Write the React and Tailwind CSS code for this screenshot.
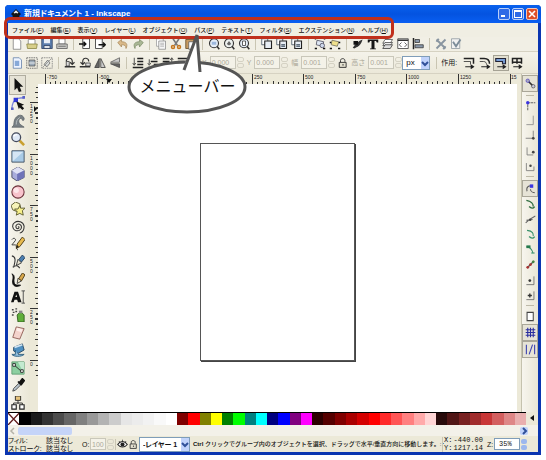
import React, { useState } from "react";

/* ---------- データ ---------- */
const MENUS = [
  ["ファイル", "F"],
  ["編集", "E"],
  ["表示", "V"],
  ["レイヤー", "L"],
  ["オブジェクト", "O"],
  ["パス", "P"],
  ["テキスト", "T"],
  ["フィルタ", "S"],
  ["エクステンション", "N"],
  ["ヘルプ", "H"],
];

const PALETTE = [
  "#000000", "#1a1a1a", "#333333", "#4d4d4d", "#666666", "#808080", "#999999",
  "#b3b3b3", "#cccccc", "#e6e6e6", "#ececec", "#f2f2f2", "#f9f9f9", "#ffffff",
  "#800000", "#ff0000", "#808000", "#ffff00", "#008000", "#00ff00", "#008080",
  "#00ffff", "#000080", "#0000ff", "#800080", "#ff00ff",
  "#2b0000", "#550000", "#800000", "#aa0000", "#d40000", "#ff0000", "#ff2a2a",
  "#ff5555", "#ff8080", "#ffaaaa", "#ffd5d5",
  "#280b0b", "#501616", "#782121", "#a02c2c", "#c83737", "#d35f5f", "#de8787",
  "#e9afaf",
];

/* ---------- アイコン (16x16) ---------- */
const ICONS = {
  // コマンドバー
  new: <path d="M3 1h7l3 3v11H3z" fill="#fff" stroke="#777" />,
  open: (
    <>
      <path d="M3 2h9v8H3z" fill="#fff" stroke="#777" />
      <path d="M1 8h14l-1 6H2z" fill="#d8cf8a" stroke="#85803f" />
    </>
  ),
  save: (
    <>
      <path d="M1 1h14v13H1z" fill="#5d7fae" stroke="#26385a" />
      <path d="M4 1h8v6H4z" fill="#e8eef6" />
      <path d="M4 10h8v4H4z" fill="#dfe3e8" stroke="#26385a" />
    </>
  ),
  print: (
    <>
      <path d="M4 1h8v7H4z" fill="#fff" stroke="#666" />
      <path d="M1 8h14v6H1z" fill="#c9c9c6" stroke="#555" />
      <path d="M3 11h10" stroke="#555" />
    </>
  ),
  import: (
    <>
      <path d="M5 1h9v13H5z" fill="#fff" stroke="#222" />
      <path d="M0 8h9M6 5l3 3-3 3" fill="none" stroke="#111" strokeWidth="2" />
    </>
  ),
  export: (
    <>
      <path d="M2 1h9v13H2z" fill="#fff" stroke="#222" />
      <path d="M6 9h9M12 6l3 3-3 3" fill="none" stroke="#111" strokeWidth="2" />
    </>
  ),
  undo: (
    <path d="M1 6l5-4v3c6 0 9 3 6 9 0-4-2-5-6-5v3z" fill="#d9b989" stroke="#a98a5c" />
  ),
  redo: (
    <path d="M15 6l-5-4v3C4 5 1 8 4 14c0-4 2-5 6-5v3z" fill="#a9b795" stroke="#7f8d6a" />
  ),
  copy: (
    <>
      <path d="M2 1h9v10H2z" fill="#fff" stroke="#999" />
      <path d="M5 4h9v11H5z" fill="#f5f5f5" stroke="#888" />
      <path d="M7 7h5M7 9h5M7 11h5" stroke="#aaa" />
    </>
  ),
  cut: (
    <>
      <path d="M4 1l6 9M12 1L6 10" stroke="#777" strokeWidth="2" />
      <circle cx="4" cy="12" r="2" fill="none" stroke="#c4761d" strokeWidth="2" />
      <circle cx="12" cy="12" r="2" fill="none" stroke="#c4761d" strokeWidth="2" />
    </>
  ),
  paste: (
    <>
      <path d="M1 2h11v12H1z" fill="#c79b62" stroke="#5e431e" />
      <path d="M5 5h9v10H5z" fill="#fff" stroke="#555" />
    </>
  ),
  zoomSel: (
    <>
      <circle cx="8" cy="7" r="6" fill="#e5edf8" stroke="#333" strokeWidth="1.5" />
      <path d="M5 5h6v4H5z" fill="#9db8dd" />
      <path d="M12 11l3 4" stroke="#333" strokeWidth="2" />
    </>
  ),
  zoomDraw: (
    <>
      <circle cx="8" cy="7" r="6" fill="#eef2f0" stroke="#333" strokeWidth="1.5" />
      <path d="M5 8l3-4 3 4-3 2z" fill="#666" />
      <path d="M12 11l3 4" stroke="#333" strokeWidth="2" />
    </>
  ),
  zoomPage: (
    <>
      <circle cx="8" cy="7" r="6" fill="#e5edf8" stroke="#333" strokeWidth="1.5" />
      <path d="M6 4h4v6H6z" fill="#fff" stroke="#333" />
      <path d="M12 11l3 4" stroke="#333" strokeWidth="2" />
    </>
  ),
  dup: (
    <>
      <path d="M1 1h8v8H1z" fill="#fff" stroke="#345" />
      <path d="M5 4h9v10H5z" fill="#e8eef5" stroke="#222" strokeWidth="1.5" />
    </>
  ),
  clone: (
    <>
      <path d="M1 1h8v8H1z" fill="#fff" stroke="#345" />
      <path d="M5 4h9v10H5z" fill="#e8eef5" stroke="#222" strokeWidth="1.5" />
      <path d="M7 9h5M7 11h5" stroke="#345" strokeWidth="1.5" />
    </>
  ),
  group: (
    <>
      <path d="M4 3l9 2-2 6-8-2z" fill="#dfe8f5" stroke="#445" />
      <path d="M1 14h3M12 14h3M1 1h2M13 1h2" stroke="#111" strokeWidth="2" />
      <circle cx="11" cy="10" r="3" fill="#cdd7ea" stroke="#445" />
    </>
  ),
  ungroup: (
    <>
      <path d="M4 3l9 2-2 6-8-2z" fill="#efe08c" stroke="#665" />
      <path d="M1 14h3M12 14h3M1 6h2M13 6h2" stroke="#111" strokeWidth="2" />
    </>
  ),
  fill: (
    <>
      <path d="M1 13c4-6 8-9 13-11-1 6-6 10-11 12z" fill="#333" />
      <path d="M2 4h6v5H2z" fill="#111" />
    </>
  ),
  text: <path d="M1 2h14v4h-2L12 4h-2v10h2v1H4v-1h2V4H4L3 6H1z" fill="#151515" />,
  layers: (
    <>
      <path d="M4 2h10l-3 5H1z" fill="#fff" stroke="#444" />
      <path d="M4 6h10l-3 4H1z" fill="#eee" stroke="#444" />
      <path d="M4 9h10l-3 5H1z" fill="#ddd" stroke="#333" />
    </>
  ),
  xml: (
    <>
      <path d="M1 1h14v13H1z" fill="#fff" stroke="#333" />
      <path d="M1 3h14" stroke="#333" strokeWidth="2" />
      <path d="M6 6L3 9l3 3M10 6l3 3-3 3" fill="none" stroke="#333" />
    </>
  ),
  align: (
    <>
      <path d="M2 0v15" stroke="#222" strokeWidth="2" />
      <path d="M4 2h6v4H4zM4 9h11v4H4z" fill="#8b99ab" stroke="#333" />
    </>
  ),
  prefs: (
    <path d="M2 2l12 12M14 2L2 14M5 1L2 5M11 15l3-4" stroke="#8995a0" strokeWidth="2.5" fill="none" />
  ),
  docprefs: (
    <>
      <path d="M2 1h11v13H2z" fill="#f1f1f1" stroke="#8a949c" />
      <path d="M4 5l4 6 6-9" stroke="#7c8c99" strokeWidth="2.5" fill="none" />
    </>
  ),
  // ツールコントロール
  selAll: (
    <>
      <path d="M3 1h8l3 3v11H3z" fill="#eef4ff" stroke="#5d7ba5" />
      <path d="M5 5h6v7H5z" fill="#87a9d8" />
    </>
  ),
  selLayer: (
    <>
      <path d="M1 1h14v14H1z" fill="none" stroke="#555" strokeDasharray="2 1" />
      <path d="M4 4h8v8H4z" fill="#9cabb9" stroke="#555" />
      <path d="M4 8h8" stroke="#fff" />
    </>
  ),
  desel: (
    <>
      <path d="M1 1h14v14H1z" fill="none" stroke="#777" strokeDasharray="2 1" />
      <path d="M4 10l5-6 3 4-4 5z" fill="#d7dad8" stroke="#666" />
      <path d="M2 14L14 2" stroke="#888" />
    </>
  ),
  rotL: (
    <>
      <path d="M1 13h14" stroke="#333" strokeWidth="2" />
      <path d="M3 6c0-5 7-6 8-1v4M8 7l3 3 3-3" fill="none" stroke="#333" strokeWidth="1.5" />
      <path d="M3 6h4v6H3z" fill="#ddd" stroke="#333" />
    </>
  ),
  rotR: (
    <>
      <path d="M1 13h14" stroke="#333" strokeWidth="2" />
      <path d="M13 6c0-5-7-6-8-1v4M8 7l-3 3-3-3" fill="none" stroke="#333" strokeWidth="1.5" />
      <path d="M9 8h6v4H9z" fill="#ddd" stroke="#333" />
    </>
  ),
  flipH: (
    <>
      <path d="M7 2v12H1z" fill="#666" stroke="#333" />
      <path d="M9 2v12h6z" fill="#ccc" stroke="#333" />
    </>
  ),
  flipV: (
    <>
      <path d="M14 1v6H2z" fill="#ccc" stroke="#555" />
      <path d="M14 14V9H2z" fill="#666" stroke="#444" />
    </>
  ),
  toBottom: (
    <>
      <path d="M1 14h14M7 10h8M7 6h8M7 2h8" stroke="#222" strokeWidth="2" />
      <path d="M3 1v9M1 8l2 3 2-3" stroke="#222" fill="none" />
    </>
  ),
  lower: (
    <>
      <path d="M1 14h14M9 10h6M5 6h9M9 2h5" stroke="#222" strokeWidth="2" />
      <path d="M3 3v6M1 8l2 3 2-3" stroke="#222" fill="none" />
    </>
  ),
  raise: (
    <>
      <path d="M1 14h14M9 10h6M1 6h9M1 2h9" stroke="#222" strokeWidth="2" />
      <path d="M13 8V2M11 4l2-3 2 3" stroke="#222" fill="none" />
    </>
  ),
  toTop: (
    <>
      <path d="M1 2h14M1 6h9M1 10h9M1 14h9" stroke="#222" strokeWidth="2" />
      <path d="M13 14V5M11 7l2-3 2 3" stroke="#222" fill="none" />
    </>
  ),
  lock: (
    <>
      <path d="M4 7V4c0-4 7-4 7 0v2" fill="none" stroke="#333" strokeWidth="1.5" />
      <path d="M2 7h11v8H2z" fill="#e3e0cf" stroke="#333" strokeWidth="1.5" />
      <path d="M7 10h2v2H7z" fill="#333" />
    </>
  ),
  affStroke: (
    <>
      <path d="M1 2h13v7" fill="none" stroke="#222" strokeWidth="2" />
      <path d="M1 6h9v4" fill="none" stroke="#222" />
      <path d="M3 13h10M11 11l3 2-3 2z" stroke="#222" strokeWidth="1.5" />
    </>
  ),
  affCorner: (
    <>
      <path d="M1 2h6c5 0 7 3 7 7" fill="none" stroke="#222" strokeWidth="2" />
      <path d="M1 6h5c3 0 4 2 4 4" fill="none" stroke="#222" />
      <path d="M3 13h10M11 11l3 2-3 2z" stroke="#222" strokeWidth="1.5" />
    </>
  ),
  affGrad: (
    <>
      <path d="M1 2h13v7h-4V6H1z" fill="#7aa0d8" stroke="#223" strokeWidth="1.5" />
      <path d="M3 13h10M11 11l3 2-3 2z" stroke="#222" strokeWidth="1.5" />
    </>
  ),
  affPattern: (
    <>
      <path d="M1 2h14M1 7h14M2 1v8M8 1v8M14 1v8" stroke="#222" strokeWidth="2" />
      <path d="M3 13h10M11 11l3 2-3 2z" stroke="#222" strokeWidth="1.5" />
    </>
  ),
  // ツールボックス
  select: <path d="M4 0v14l3-3 2 5 3-1-2-5h4z" fill="#111" />,
  node: (
    <>
      <path d="M1 15c0-7 2-10 6-12 3-1 5-1 8-1" fill="none" stroke="#7d86dc" strokeWidth="1.5" />
      <path d="M3 2h5v5H3z" fill="#3038d8" />
      <path d="M13 0h3v3h-3zM0 13h3v3H0z" fill="#555fc8" />
      <path d="M6 6l9 4-3 1 3 3-2 2-3-3-1 2z" fill="#111" />
    </>
  ),
  tweak: (
    <>
      <path d="M1 15c3-1 2-5 3-8 2-6 9-8 11-2 0 2-1 3-2 2 0-2-3-3-4 0-1 4 3 6 6 8z" fill="#777f84" stroke="#62696d" />
      <path d="M6 12c0-4 1-6 4-8" fill="none" stroke="#bcc2c4" />
    </>
  ),
  zoom: (
    <>
      <path d="M10 10l5 5" stroke="#c9a030" strokeWidth="3" />
      <circle cx="6" cy="6" r="5" fill="#dfe9f6" stroke="#444a5c" strokeWidth="1.5" />
      <path d="M3 5c1-2 3-2 4-2" stroke="#fff" fill="none" strokeWidth="1.5" />
    </>
  ),
  rect: (
    <>
      <path d="M1 2h14v13H1z" fill="#a9cbe6" stroke="#3c4c5c" />
      <path d="M2 3h12L2 14z" fill="#d5e6f4" />
    </>
  ),
  box: (
    <>
      <path d="M8 0l7 4v8l-8 4-6-4V4z" fill="#a9acdc" stroke="#44475f" />
      <path d="M8 0l7 4-8 4-6-4z" fill="#dfe1f5" />
      <path d="M7 8v8l8-4V4z" fill="#6f73b8" />
    </>
  ),
  ellipse: (
    <>
      <circle cx="8" cy="8" r="7" fill="#f8c3cc" stroke="#6b3039" strokeWidth="1.2" />
      <circle cx="6" cy="6" r="3" fill="#fde6e9" />
    </>
  ),
  star: (
    <>
      <path d="M5 0l5 2 1 5-4 4-5-2L0 4z" fill="#f6f3b8" stroke="#55532a" />
      <path d="M10 4l1 3h5l-3 3 1 5-4-2-4 2 1-4-3-3h4z" fill="#f7f08a" stroke="#55532a" />
    </>
  ),
  spiral: (
    <path d="M8 8c1-1 2 1 0 2-2 0-3-2-2-4 2-3 6-1 6 2 0 4-4 5-7 4-4-2-4-7-1-9 4-3 10-1 11 4 0 4-2 7-5 8" fill="none" stroke="#333" strokeWidth="1.2" />
  ),
  pencil: (
    <>
      <path d="M1 3c2-3 5-1 4 1L1 9h4c2 0 0 5 3 6" fill="none" stroke="#333" />
      <path d="M6 13l1-5 6-8 3 3-6 8z" fill="#e7ba4f" stroke="#443514" />
      <path d="M6 13l1-4 2 2z" fill="#222" />
    </>
  ),
  pen: (
    <>
      <path d="M1 1c5 1 4 6 2 13M2 14c4-3 6-2 8 1" fill="none" stroke="#333" strokeWidth="1.2" />
      <path d="M6 12l2-7 4 4z" fill="#e9e4d2" stroke="#333" />
      <path d="M9 5l4-5 3 3-4 5z" fill="#4b7fb0" stroke="#243c55" />
    </>
  ),
  calligraphy: (
    <>
      <path d="M1 1c5 2 1 7 3 11 2 3 5 1 7 2-3 2-8 2-9-2C1 8 4 4 1 1z" fill="#111" stroke="#111" />
      <path d="M7 12l1-6 4 3z" fill="#efe6c8" stroke="#333" />
      <path d="M9 6l4-6 3 2-4 7z" fill="#d8a84c" stroke="#443514" />
    </>
  ),
  type: (
    <>
      <path d="M0 14L4 2h4l4 12H8l-1-3H4l-1 3zM5 8h2L6 5z" fill="#111" fillRule="evenodd" />
      <path d="M14 1v14M12 1h4M12 15h4" stroke="#444" />
    </>
  ),
  spray: (
    <>
      <path d="M7 8l4-4 4 4v8H8z" fill="#5fae3a" stroke="#2d5a1a" />
      <path d="M9 3h4v3H9z" fill="#888" />
      <path d="M1 2h2M5 1h2M2 5h2M5 4h2M1 8h2" stroke="#444" strokeWidth="1.5" />
    </>
  ),
  eraser: (
    <>
      <path d="M6 1l9 2-5 12-8-2z" fill="#f3d3cc" stroke="#8b5a52" />
      <path d="M7 2l6 2-1 3-6-2z" fill="#fdeeea" />
    </>
  ),
  bucket: (
    <>
      <path d="M3 5l10-4 2 7-7 4-5-3z" fill="#4e8fc0" stroke="#23445e" />
      <path d="M4 5l9-3" stroke="#cfe4f3" strokeWidth="2" />
      <path d="M5 8v5H1c2 3 11 3 14 0H8" fill="#8fbede" stroke="#285a7c" />
    </>
  ),
  gradient: (
    <>
      <path d="M1 1h14v14H1z" fill="#8ccfa0" stroke="#5c9c70" />
      <path d="M8 1h7v14z" fill="#c3ead0" />
      <path d="M3 4l9 8" stroke="#222" />
      <path d="M2 3h3v3H2zM11 10h3v3h-3z" fill="#fff" stroke="#222" />
    </>
  ),
  dropper: (
    <>
      <path d="M2 15l1-3 6-6 2 2-6 6z" fill="#b8c4cc" stroke="#444" />
      <path d="M8 4l4 4M10 5l3-4 2 2-3 4z" stroke="#111" strokeWidth="2" fill="#111" />
    </>
  ),
  connector: (
    <>
      <path d="M8 5v4M3 11V8h10v3" fill="none" stroke="#222" />
      <path d="M5 0h6v5H5z" fill="#e7c37c" stroke="#222" />
      <path d="M1 10h5v5H1zM10 10h5v5h-5z" fill="#fff" stroke="#222" strokeWidth="1.3" />
    </>
  ),
  // スナップバー
  snap: (
    <>
      <path d="M4 4l8 8" stroke="#333" strokeWidth="2.5" />
      <circle cx="4" cy="4" r="2.5" fill="#aab" stroke="#4a3fc4" />
      <circle cx="12" cy="12" r="2.5" fill="#ccd" stroke="#444" />
    </>
  ),
  snapBox: (
    <>
      <path d="M4 15V4h11" fill="none" stroke="#666" strokeDasharray="4 1" strokeWidth="1.5" />
      <circle cx="4" cy="4" r="2.5" fill="#3b35e0" />
    </>
  ),
  snapEdge: <path d="M12 1v13H2" fill="none" stroke="#888" strokeWidth="1.2" />,
  snapCorner: (
    <>
      <path d="M12 1v11H1" fill="none" stroke="#777" strokeWidth="1.2" />
      <circle cx="12" cy="12" r="2" fill="#444" />
    </>
  ),
  snapMid: (
    <>
      <path d="M3 2v11h9" fill="none" stroke="#777" strokeWidth="1.2" />
      <circle cx="12" cy="9" r="2" fill="#444" />
    </>
  ),
  snapCenter: (
    <>
      <path d="M2 3v11h11V8" fill="none" stroke="#777" strokeWidth="1.2" />
      <circle cx="8" cy="7" r="1.8" fill="#444" />
    </>
  ),
  snapNode: (
    <>
      <path d="M3 12c-2-8 5-9 8-7M8 9c0 3 3 5 6 5" fill="none" stroke="#555" strokeWidth="1.5" />
      <path d="M7 2h5v5H7z" fill="#3b35e0" />
    </>
  ),
  snapPath: (
    <>
      <path d="M2 2c9 2 10 5 10 9" fill="none" stroke="#2c6b3e" strokeWidth="2" />
      <path d="M6 11c3 3 6 3 8 0" fill="none" stroke="#2c6b3e" strokeWidth="2" />
    </>
  ),
  snapCross: (
    <>
      <path d="M1 13c3-3 8-7 14-10M2 9l9-1" fill="none" stroke="#666" strokeWidth="1.5" />
      <path d="M6 7h3v3H6z" fill="#444" />
    </>
  ),
  snapCusp: (
    <>
      <path d="M3 2c9 1 9 5 9 8" fill="none" stroke="#35906a" strokeWidth="1.5" />
      <path d="M6 11c3 3 6 3 8 0" fill="none" stroke="#35906a" strokeWidth="2" />
    </>
  ),
  snapSmooth: (
    <>
      <path d="M2 4c5 0 8 3 10 10M9 13h5" fill="none" stroke="#35906a" strokeWidth="1.5" />
      <path d="M2 2h6v4H2z" fill="#277a4d" />
    </>
  ),
  snapLine: (
    <>
      <path d="M3 13L13 3" stroke="#555" strokeWidth="2" />
      <circle cx="4" cy="12" r="2" fill="#a33" />
      <circle cx="8" cy="8" r="2" fill="#a33" />
      <circle cx="12" cy="4" r="2" fill="#484" />
    </>
  ),
  snapObj: (
    <>
      <path d="M13 2v12H2" fill="none" stroke="#666" strokeWidth="1.2" />
      <circle cx="7" cy="8" r="2" fill="#333" />
    </>
  ),
  snapRot: (
    <>
      <path d="M13 2v12H2" fill="none" stroke="#666" strokeWidth="1.2" />
      <path d="M7 5v6M4 8h6" stroke="#333" strokeWidth="2" />
    </>
  ),
  snapPage: <path d="M3 2h9v12H3z" fill="#fff" stroke="#444" strokeWidth="1.5" />,
  snapGrid: (
    <path d="M1 4h14M1 8h14M1 12h14M4 1v14M8 1v14M12 1v14" stroke="#2a2ea0" strokeWidth="1.6" />
  ),
  snapGuide: <path d="M2 1v14M14 1v14M6 15L11 1" stroke="#3c42b0" strokeWidth="1.6" />,
  // ステータスバー
  eye: (
    <>
      <path d="M1 8c4-6 10-6 14 0-4 5-10 5-14 0z" fill="#fff" stroke="#222" strokeWidth="1.5" />
      <circle cx="8" cy="8" r="3" fill="#222" />
      <path d="M3 3l1 2M8 1v2M13 3l-1 2" stroke="#222" />
    </>
  ),
};

const COMMANDS = [
  "new", "open", "save", "print", "|", "import", "export", "|", "undo", "redo",
  "|", "copy", "cut", "paste", "|", "zoomSel", "zoomDraw", "zoomPage", "|",
  "dup", "clone", "clone", "|", "group", "ungroup", "|", "fill", "text",
  "layers", "xml", "align", "|", "prefs", "docprefs",
];

const SELECT_CONTROLS = [
  "selAll", "selLayer", "desel", "|", "rotL", "rotR", "flipH", "flipV", "|",
  "toBottom", "lower", "raise", "toTop",
];

const TOOLS = [
  "select", "node", "tweak", "zoom", "rect", "box", "ellipse", "star",
  "spiral", "pencil", "pen", "calligraphy", "type", "spray", "eraser",
  "bucket", "gradient", "dropper", "connector",
];

const SNAPS = [
  "snap", "|", "snapBox", "snapEdge", "snapCorner", "snapMid", "snapCenter",
  "|", "snapNode", "snapPath", "snapCross", "snapCusp", "snapSmooth",
  "snapLine", "snapObj", "snapRot", "|", "snapPage", "snapGrid", "snapGuide",
];

const SNAP_ON = ["snap", "snapNode", "snapGrid", "snapGuide"];

/* ---------- 部品 ---------- */
const Icon = ({ name, className = "size-3" }) => (
  <svg viewBox="0 0 16 16" className={`shrink-0 ${className}`} aria-hidden="true">
    {ICONS[name]}
  </svg>
);

const IconRow = ({ items }) =>
  items.map((name, i) =>
    name === "|" ? (
      <span key={i} className="flex w-2 shrink-0 justify-center">
        <span className="h-3 w-px bg-[#c9c5b2]" />
      </span>
    ) : (
      <button key={i} aria-label={name} className="flex w-[15px] shrink-0 justify-center">
        <Icon name={name} />
      </button>
    )
  );

const Spinner = () => (
  <span className="flex w-[7px] shrink-0 flex-col gap-px">
    <span className="h-[5px] rounded-xs border border-[#d5d2c4]" />
    <span className="h-[5px] rounded-xs border border-[#d5d2c4]" />
  </span>
);

const NumField = ({ label, value }) => (
  <label className="flex shrink-0 items-center gap-[3px] text-[#aca899]">
    {label}
    <span className="flex items-center gap-px">
      <input
        defaultValue={value}
        disabled
        className="h-[13px] w-[26px] border border-[#c9c7ba] bg-[#f4f2e8] pl-px text-[7px] text-[#aca899]"
      />
      <Spinner />
    </span>
  </label>
);

const Chevron = () => (
  <span className="pointer-events-none absolute inset-y-px right-px flex w-2 items-center justify-center bg-[#c1d3fb]">
    <svg viewBox="0 0 8 8" className="size-2">
      <path d="M1 3l3 3 3-3" fill="none" stroke="#31519a" strokeWidth="2" />
    </svg>
  </span>
);

// 大目盛りの間隔 (250 単位)
const STEP = 51.6;

const HRuler = () => {
  const majors = [-3, -2, -1, 0, 1, 2, 3, 4, 5];
  return (
    <svg className="h-[10px] w-full" aria-hidden="true">
      {majors.map((n) => {
        const x = Math.round(162 + n * STEP);
        return (
          <g key={n}>
            <path d={`M${x + 0.5} 0v10`} stroke="#333" />
            {[1, 2, 3, 4, 5, 6, 7, 8, 9].map((m) => (
              <path
                key={m}
                d={`M${Math.round(x + (m * STEP) / 10) + 0.5} ${m % 2 ? 8 : 7}V10`}
                stroke="#333"
              />
            ))}
            {/* -250 と 0 は吹き出しの下 */}
            {n !== -1 && n !== 0 && (
              <text x={x + 2} y="5" fontSize="5" fill="#222">
                {n * 250}
              </text>
            )}
          </g>
        );
      })}
      <path d="M472.5 0v10" stroke="#333" />
      <text x="473" y="5" fontSize="5" fill="#222">
        15
      </text>
      <path d="M68 5h6l-3 4z" fill="#111" />
    </svg>
  );
};

const VRuler = () => {
  const majors = [0, 1, 2, 3, 4, 5];
  return (
    <svg className="h-full w-2" aria-hidden="true">
      {majors.map((n) => {
        const y = Math.round(276 - n * STEP);
        return (
          <g key={n}>
            <path d={`M0 ${y + 0.5}h8`} stroke="#333" />
            {[-9, -8, -7, -6, -5, -4, -3, -2, -1, 1, 2, 3].map((m) => (
              <path
                key={m}
                d={`M${m % 2 ? 6 : 5} ${Math.round(y + (m * STEP) / 10) + 0.5}H8`}
                stroke="#333"
              />
            ))}
            {String(n * 250).split("").map((c, i) => (
              <text key={i} x="0" y={y + 6 + i * 5} fontSize="5" fill="#222">
                {c}
              </text>
            ))}
          </g>
        );
      })}
      <path d="M4 22v6l3-3z" fill="#111" />
    </svg>
  );
};

/* ---------- 画面 ---------- */
const App = () => {
  const [tool, setTool] = useState("select");

  return (
    <div className="relative flex min-h-screen flex-col bg-white p-[5px] font-['Liberation_Sans','Noto_Sans_CJK_JP',sans-serif] text-[7px] leading-none text-[#111]">
      <div className="flex flex-1 flex-col rounded-t-sm border-x-[3px] border-b-[3px] border-[#0a35b0] bg-[#ece9d8]">
        {/* タイトルバー */}
        <header className="-mx-[3px] flex h-[18px] shrink-0 items-center rounded-t-sm bg-linear-to-b from-[#0a62ee] via-[#0453e0] to-[#0a5ff2] pr-[3px] pl-[3px]">
          <svg viewBox="0 0 16 16" className="mx-[3px] size-[10px]" aria-hidden="true">
            <path d="M8 0l8 8-3 3 1 2-6 3-6-3 1-2-3-3z" fill="#151515" />
            <path d="M8 2l4 4-2 1-2-1-2 1-2-1z" fill="#eee" />
          </svg>
          <h1 className="flex-1 text-[8px] font-bold whitespace-nowrap text-white [font-feature-settings:'palt']">
            新規ドキュメント 1 - Inkscape
          </h1>
          <div className="flex gap-[2px]">
            <button aria-label="最小化" className="flex size-3 items-end rounded-xs border border-[#b9cff8] bg-[#2f6ae6] p-[2px]">
              <span className="h-[2px] w-1 bg-white" />
            </button>
            <button aria-label="最大化" className="size-3 rounded-xs border border-[#b9cff8] bg-[#2f6ae6] p-px">
              <span className="block size-2 border border-t-2 border-white" />
            </button>
            <button aria-label="閉じる" className="size-3 rounded-xs border border-[#f3c6b8] bg-[#df4f28]">
              <svg viewBox="0 0 10 10" className="size-[10px]">
                <path d="M2 2l6 6M8 2L2 8" stroke="#fff" strokeWidth="1.6" />
              </svg>
            </button>
          </div>
        </header>

        {/* メニューバー */}
        <nav className="flex h-[14px] shrink-0 items-center bg-[#f0eee3] pl-1">
          <ul className="flex w-[376px] justify-between text-[6px] font-medium">
            {MENUS.map(([name, key]) => (
              <li key={key}>
                <button className="block whitespace-nowrap">
                  {name}(<u>{key}</u>)
                </button>
              </li>
            ))}
          </ul>
        </nav>

        {/* コマンドバー */}
        <div className="flex h-[14px] shrink-0 items-center bg-[#f1efe5] pl-px">
          <IconRow items={COMMANDS} />
        </div>

        {/* ツールコントロールバー */}
        <div className="flex h-[23px] shrink-0 items-center border-y border-t-[#d6d2c2] border-b-[#d6d2c2] bg-linear-to-b from-[#f5f3ea] to-[#ebe8d9] pl-px">
          <IconRow items={SELECT_CONTROLS} />
          <div className="ml-3 flex items-center gap-[3px]">
            <NumField label="X" value="0.000" />
            <NumField label="Y" value="0.000" />
            <NumField label="幅" value="0.001" />
            <button aria-label="縦横比を固定">
              <Icon name="lock" className="size-[10px]" />
            </button>
            <NumField label="高さ" value="0.001" />
          </div>
          <span className="relative">
            <select
              aria-label="単位"
              className="block h-[14px] w-7 appearance-none border border-[#7f9db9] bg-white pl-[3px] text-[8px]"
            >
              <option>px</option>
            </select>
            <Chevron />
          </span>
          <span className="mr-1 ml-[6px] h-3 w-px bg-[#c9c5b2]" />
          <span className="whitespace-nowrap">作用:</span>
          <div className="ml-1 flex">
            {["affStroke", "affCorner", "affGrad", "affPattern"].map((name) => (
              <button
                key={name}
                aria-label={name}
                className={`flex h-4 w-4 items-center justify-center ${
                  name === "affGrad" ? "border border-[#a5a294] bg-[#e2dfd0]" : ""
                }`}
              >
                <Icon name={name} />
              </button>
            ))}
          </div>
        </div>

        {/* 作業エリア */}
        <main className="flex flex-1">
          <div className="flex w-[22px] shrink-0 flex-col items-start bg-linear-to-r from-[#f7f5ee] to-[#e9e6d6] pt-px pl-px">
            {TOOLS.map((name) => (
              <button
                key={name}
                aria-label={name}
                aria-pressed={tool === name}
                onClick={() => setTool(name)}
                className={`flex w-[17px] flex-1 items-center justify-center ${
                  tool === name ? "border border-[#b0ad9f] bg-[#e6e3d6]" : ""
                }`}
              >
                <Icon name={name} className="size-[14px]" />
              </button>
            ))}
          </div>
          <div className="flex w-2 shrink-0 pt-[10px]">
            <VRuler />
          </div>
          <div className="flex min-w-0 flex-1 flex-col">
            <HRuler />
            <div className="flex flex-1 items-center justify-center bg-white pt-2">
              <div className="h-[218px] w-[155px] border border-[#555] bg-white shadow-[1px_1px_0_#444]" />
            </div>
          </div>
          <div className="w-[5px] shrink-0 border-r border-[#c5c2ae]" />
          <div className="flex w-4 shrink-0 flex-col bg-linear-to-r from-[#f7f5ee] to-[#e9e6d6] pt-px pb-[54px]">
            {SNAPS.map((name, i) =>
              name === "|" ? (
                <span key={i} className="flex h-[6px] items-center px-1">
                  <span className="h-px w-full bg-[#bdb9a8]" />
                </span>
              ) : (
                <button
                  key={i}
                  aria-label={name}
                  className={`flex flex-1 items-center justify-center ${
                    SNAP_ON.includes(name) ? "border border-[#a9a698] bg-[#e6e3d6]" : ""
                  }`}
                >
                  <Icon name={name} className="size-[11px]" />
                </button>
              )
            )}
          </div>
        </main>

        {/* カラーパレット */}
        <div className="flex h-[13px] shrink-0">
          <div className="flex flex-1 border-t border-black">
            <button aria-label="なし" className="flex-1 bg-white">
              <svg viewBox="0 0 12 12" preserveAspectRatio="none" className="size-full">
                <path d="M0 0l12 12M12 0L0 12" stroke="#5e1a1a" strokeWidth="1.4" />
              </svg>
            </button>
            {PALETTE.map((color, i) => (
              <button key={i} aria-label={color} className="flex-1" style={{ background: color }} />
            ))}
          </div>
          <button aria-label="パレットメニュー" className="w-3">
            <svg viewBox="0 0 12 12" className="size-3">
              <path d="M8 2v6L4 5z" fill="#111" />
            </svg>
          </button>
        </div>

        {/* 横スクロールバー */}
        <div className="flex h-[11px] shrink-0 items-center bg-[#f3f1e9] pr-[10px]">
          <svg viewBox="0 0 8 8" className="ml-px size-2">
            <path d="M5 1L2 4l3 3" fill="none" stroke="#b5b3a8" strokeWidth="1.5" />
          </svg>
          <span className="ml-px h-2 w-[54px] rounded-xs bg-[#c5d4f8]" />
          <span className="flex-1" />
          <span className="flex size-2 items-center justify-center rounded-xs bg-[#c1d3fb]">
            <svg viewBox="0 0 8 8" className="size-2">
              <path d="M3 1l3 3-3 3" fill="none" stroke="#31519a" strokeWidth="2" />
            </svg>
          </span>
        </div>

        {/* ステータスバー */}
        <footer className="flex h-4 shrink-0 items-center">
          <dl className="grid w-[74px] shrink-0 grid-cols-[38px_1fr] gap-y-px whitespace-nowrap [font-feature-settings:'palt']">
            <dt>フィル:</dt>
            <dd>該当なし</dd>
            <dt>ストローク:</dt>
            <dd>該当なし</dd>
          </dl>
          <label className="flex shrink-0 items-center gap-px">
            <span className="w-[7px]">O:</span>
            <input
              defaultValue="100"
              disabled
              className="h-3 w-4 border border-[#c9c7ba] bg-[#f4f2e8] pl-px text-[7px] text-[#aca899]"
            />
            <Spinner />
          </label>
          <div className="mx-px flex shrink-0 items-center gap-px border-l border-[#c9c5b2] pl-px">
            <button aria-label="レイヤーの表示">
              <Icon name="eye" className="size-[11px]" />
            </button>
            <button aria-label="レイヤーのロック">
              <Icon name="lock" className="size-[9px]" />
            </button>
          </div>
          <span className="relative shrink-0">
            <select
              aria-label="レイヤー"
              className="block h-[15px] w-[51px] appearance-none border border-[#7f9db9] bg-white pl-[3px] text-[7px] font-bold [font-feature-settings:'palt']"
            >
              <option>-レイヤー 1</option>
            </select>
            <Chevron />
          </span>
          <p className="ml-[3px] min-w-0 flex-1 text-[6px] font-medium whitespace-nowrap">
            <b>Ctrl</b> クリックでグループ内のオブジェクトを選択、ドラッグで水平/垂直方向に移動します。:･
          </p>
          <dl className="grid shrink-0 grid-cols-[9px_30px] gap-y-px border-l border-[#c9c5b2] pl-px font-['Liberation_Mono',monospace]">
            <dt>X:</dt>
            <dd className="text-right">-440.00</dd>
            <dt>Y:</dt>
            <dd className="text-right">1217.14</dd>
          </dl>
          <label className="mr-[11px] ml-1 flex shrink-0 items-center gap-px">
            <span className="w-[6px]">Z:</span>
            <input
              defaultValue="35%"
              className="h-3 w-[26px] border border-[#7f9db9] bg-white pl-1 font-['Liberation_Mono',monospace] text-[7px]"
            />
            <span className="flex w-[6px] flex-col gap-px">
              <span className="h-[5px] rounded-xs bg-[#9db8ee]" />
              <span className="h-[5px] rounded-xs bg-[#9db8ee]" />
            </span>
          </label>
        </footer>
      </div>

      {/* 説明用の赤枠と吹き出し */}
      <div className="absolute top-[17px] left-1 h-[22px] w-[390px] rounded-md border-[3px] border-[#c0301c]" />
      <div className="absolute top-8 left-[127px] h-[82px] w-[121px]">
        <svg viewBox="0 0 121 82" className="size-full" aria-hidden="true">
          <ellipse cx="60" cy="55" rx="58" ry="25" fill="#fff" stroke="#555" strokeWidth="3" />
          <path d="M56 36L70 3l3 36z" fill="#fff" />
          <path d="M57 38L70 3l3 37" fill="none" stroke="#555" strokeWidth="3" strokeLinejoin="bevel" />
        </svg>
        <p className="absolute inset-x-0 top-[47px] text-center text-[16px] leading-none whitespace-nowrap">
          メニューバー
        </p>
      </div>
    </div>
  );
};

export default App;
